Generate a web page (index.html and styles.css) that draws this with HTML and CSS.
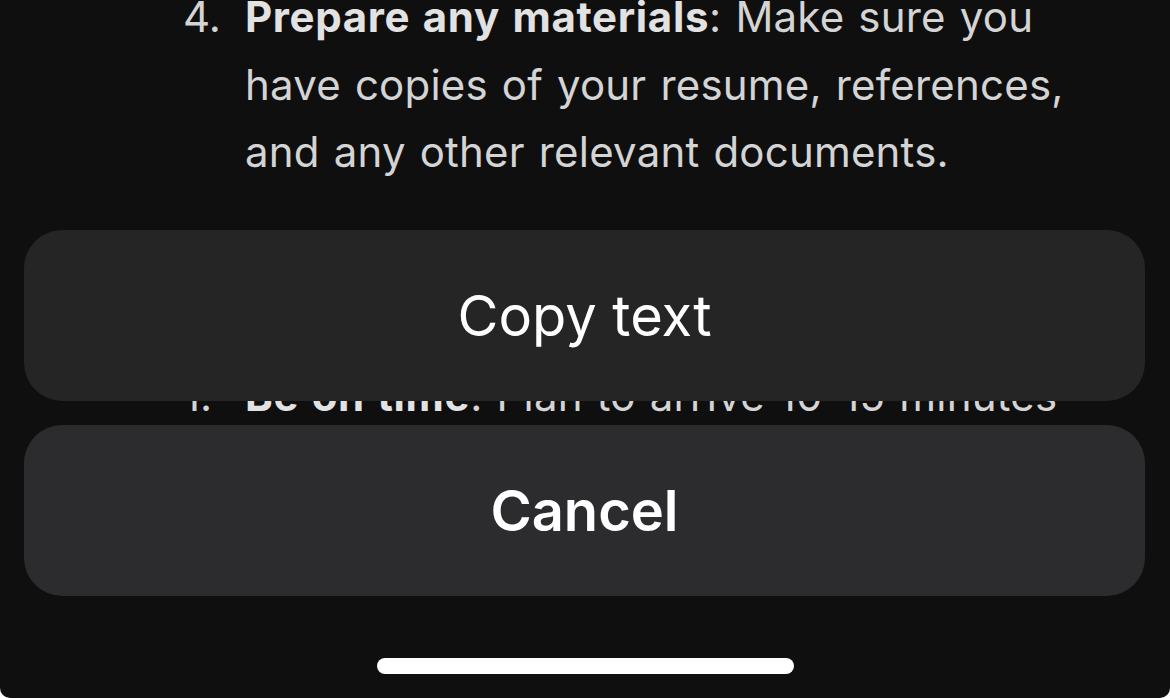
FILE: index.html
```html
<!DOCTYPE html>
<html lang="en">
<head>
    <meta charset="UTF-8">
    <meta name="viewport" content="width=device-width, initial-scale=1.0">
    <title>Chat - Copy text</title>
    <link rel="stylesheet" href="styles.css">
</head>
<body>

<div class="screen">
    <!-- message content behind the action sheet -->
    <div class="message">
        <ol class="steps">
            <li class="step">
                <span class="num">4.</span>
                <span class="body"><b>Prepare any materials</b>: Make sure you have copies of your resume, references, and any other relevant documents.</span>
            </li>
        </ol>

        <h3 class="section">During the interview:</h3>

        <ol class="steps">
            <li class="step">
                <span class="num">1.</span>
                <span class="body"><b>Be on time</b>: Plan to arrive 10-15 minutes early to allow time for parking and security.</span>
            </li>
        </ol>
    </div>

    <!-- Action sheet -->
    <div class="sheet">
        <button class="action">Copy text</button>
        <button class="action cancel">Cancel</button>
        <div class="home-bar"></div>
    </div>
</div>

</body>
</html>
```

FILE: styles.css
```css
html, body {
    margin: 0;
    padding: 0;
}

body {
    background-color: #ffffff;
    font-family: Inter, "Noto Sans", "Liberation Sans", sans-serif;
    overflow: hidden;
}

.screen {
    position: relative;
    width: 1170px;
    height: 698px;
    background-color: #0f0f0f;
    border-radius: 0 0 10px 10px;
    overflow: hidden;
}

.message {
    padding: 0 0 0 183px;
    margin-top: -17px;
    color: #d4d4d4;
    font-size: 42px;
    line-height: 67.5px;
    letter-spacing: 0.2px;
    word-spacing: 2px;
}

.steps {
    list-style: none;
    margin: 0;
    padding: 0;
}

.step {
    display: flex;
}

.num {
    width: 35px;
    flex-shrink: 0;
    margin-right: 27px;
    letter-spacing: 0;
}

.body {
    width: 850px;
}

.body b {
    color: #e2e2e2;
    font-weight: 700;
    letter-spacing: 0.65px;
}

.section {
    margin: 54.5px 0;
    font-size: 42px;
    line-height: 67.5px;
    font-weight: 700;
    color: #e2e2e2;
}

/* action sheet over the chat */
.sheet {
    position: absolute;
    left: 24px;
    right: 25px;
    top: 230px;
    display: flex;
    flex-direction: column;
    gap: 24px;
}

.action {
    height: 171px;
    border: none;
    border-radius: 38px;
    background-color: #252525;
    color: #ffffff;
    font-family: Inter, "Noto Sans", "Liberation Sans", sans-serif;
    font-size: 56px;
    font-weight: 400;
    padding: 0;
    cursor: pointer;
}

.action.cancel {
    background-color: #2c2c2e;
    font-weight: 600;
}

.home-bar {
    align-self: center;
    width: 417px;
    height: 16px;
    margin-top: 38px;
    margin-left: 2px;
    border-radius: 8px;
    background-color: #ffffff;
}
```
